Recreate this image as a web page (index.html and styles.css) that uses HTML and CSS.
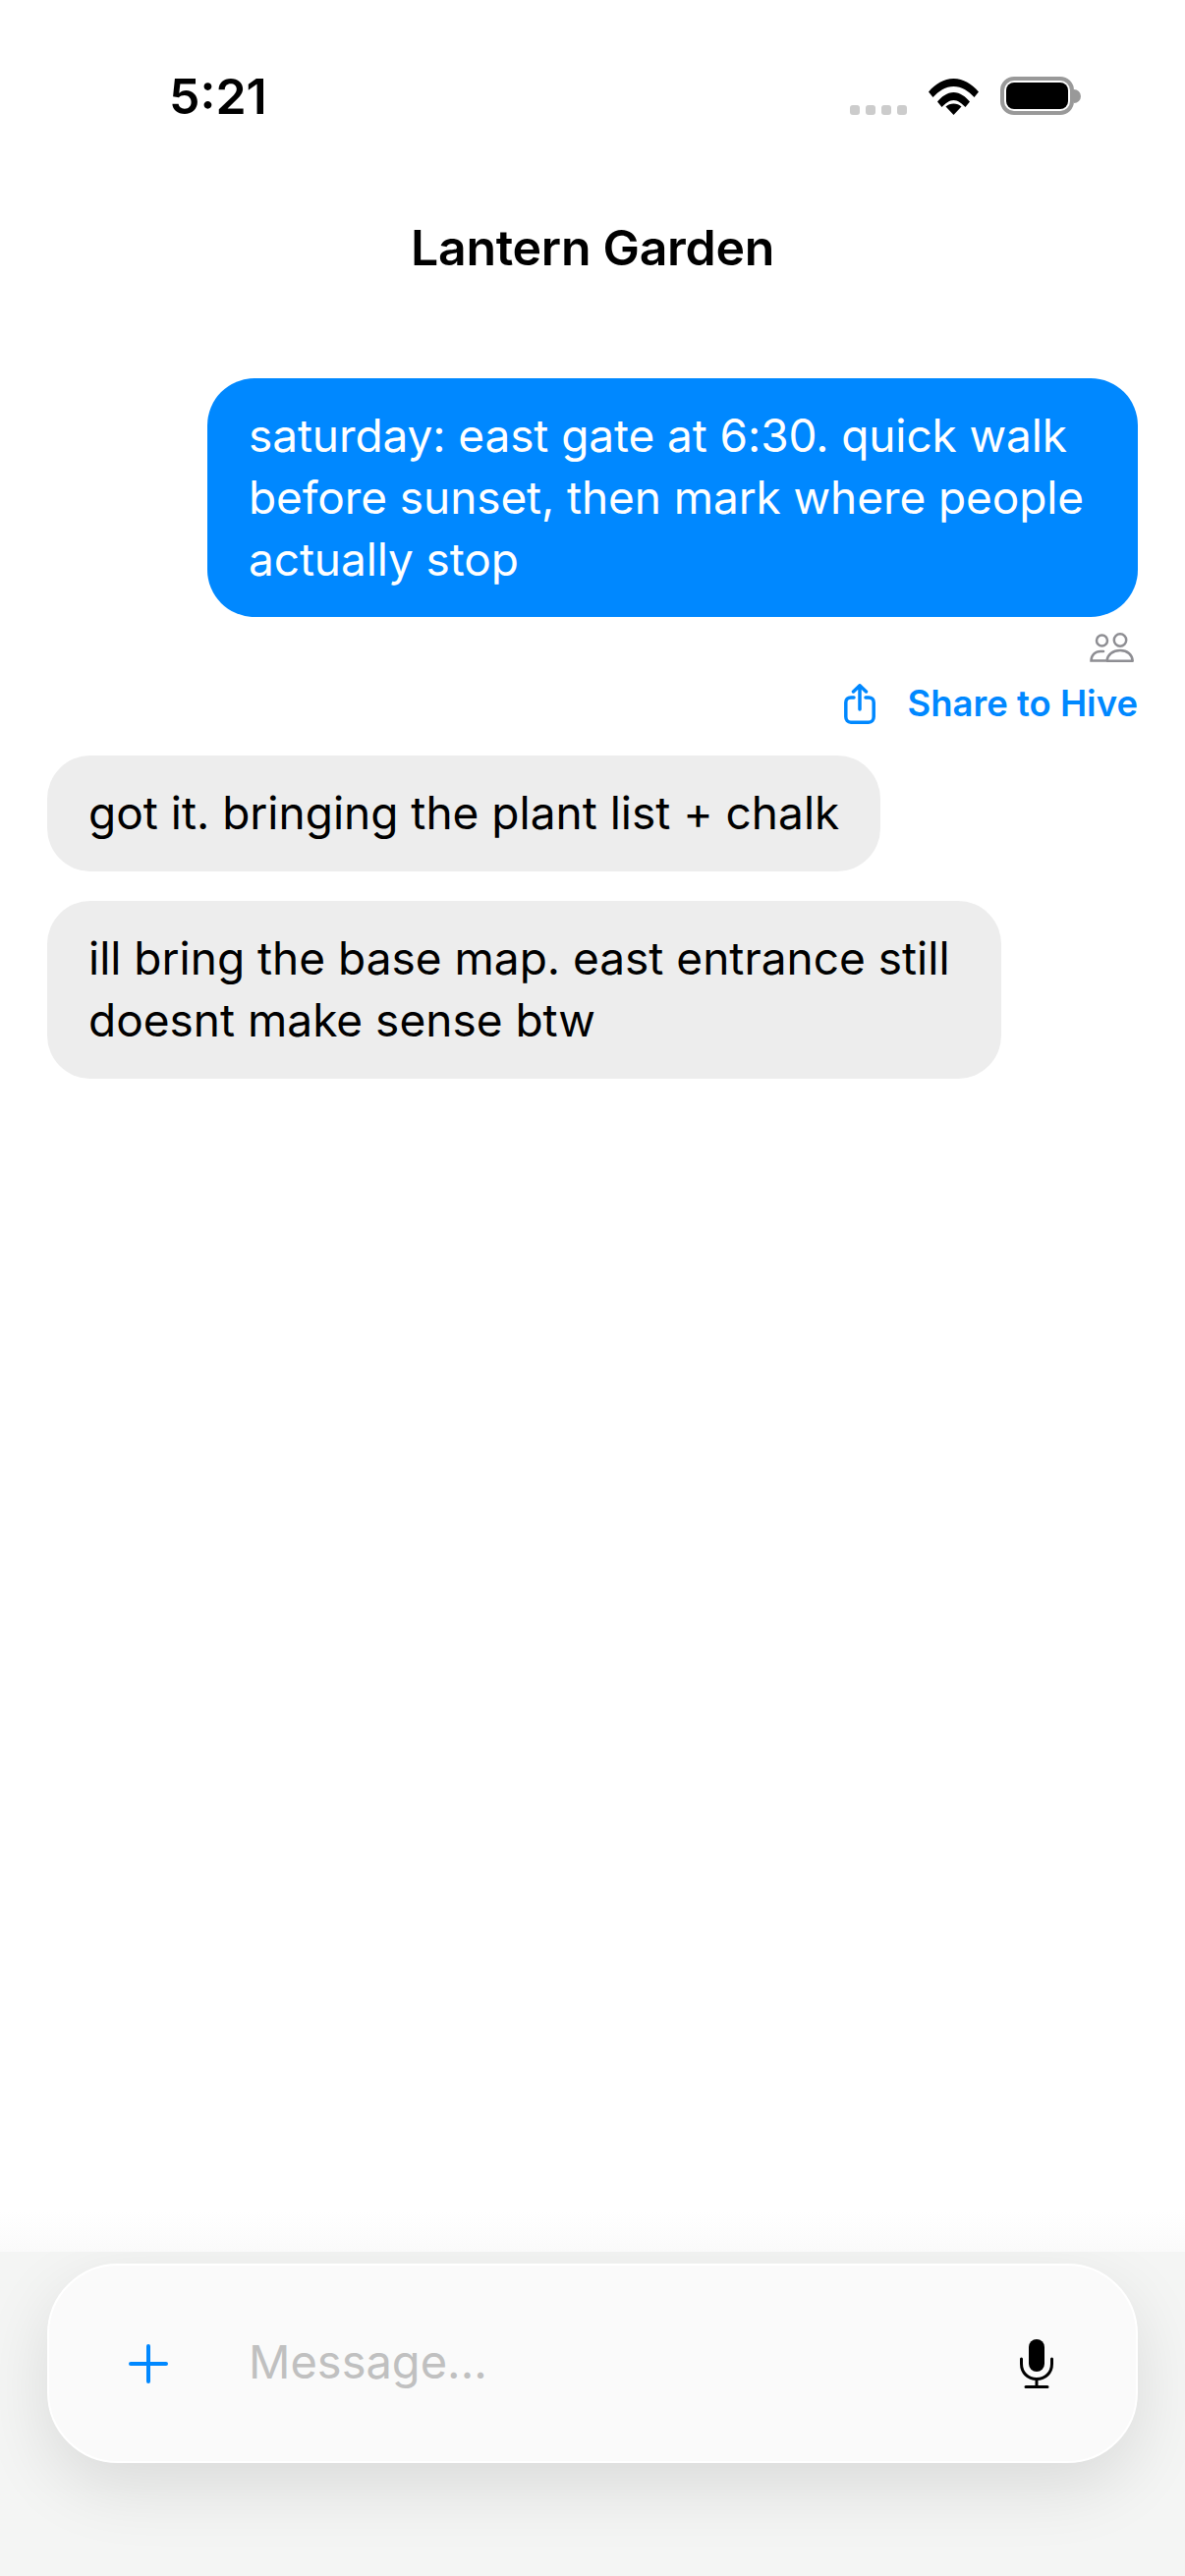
FILE: index.html
```html
<!DOCTYPE html>
<html lang="en">
<head>
    <meta charset="UTF-8">
    <meta name="viewport" content="width=device-width, initial-scale=1.0">
    <title>Lantern Garden</title>
    <link rel="stylesheet" href="styles.css">
</head>
<body>
    <div class="screen">
        <!-- Status bar -->
        <div class="status-bar">
            <span class="time">5:21</span>
            <div class="status-icons">
                <div class="signal"><i></i><i></i><i></i><i></i></div>
                <svg class="wifi" viewBox="0 0 51 37" width="51" height="37">
                    <path d="M0 13.5C7 5.5 15.5 0 25.5 0S44 5.5 51 13.5L46.5 19C40.5 12.5 33.5 8 25.5 8S10.500 12.500 4.500 19Z"/>
                    <path d="M9 23.500C13 18.500 19 14 25.500 14S38 18.500 42 23.500L37.500 29C34 25.500 30 22 25.500 22S17 25.500 13.500 29Z"/>
                    <path d="M17.500 28.500C19.500 26.500 22.500 25.500 25.500 25.500S31.500 26.500 33.500 28.500L25.500 37Z"/>
                </svg>
                <div class="battery"><div class="battery-fill"></div></div>
                <div class="battery-nub"></div>
            </div>
        </div>

        <!-- Title -->
        <div class="nav-bar"><h1>Lantern Garden</h1></div>

        <!-- Messages -->
        <div class="chat">
            <div class="bubble sent">saturday: east gate at 6:30. quick walk before sunset, then mark where people actually stop</div>
            <div class="audience">
                <svg viewBox="0 0 45 30" width="45" height="30" fill="none" stroke="#8e8e93" stroke-width="2.5">
                    <circle cx="12.500" cy="8" r="5.500"/>
                    <path d="M14 19H11C5.500 19 1.500 23 1.500 28.500H16" stroke-linecap="round"/>
                    <circle cx="31" cy="7.500" r="6.200"/>
                    <path d="M31 18C23.500 18 18 22.500 17.500 28.700H43.700C43.300 22.500 38.500 18 31 18Z" stroke-linejoin="round"/>
                </svg>
            </div>
            <div class="share">
                <svg viewBox="0 0 32 41" width="32" height="41" fill="none" stroke="#0088ff" stroke-width="3.500" stroke-linecap="round" stroke-linejoin="round">
                    <path d="M10 14H7C3.800 14 1.800 16 1.800 19V33.500C1.800 37 3.800 39.200 7 39.200H25C28.200 39.200 30.200 37 30.200 33.500V19C30.200 16 28.200 14 25 14H22"/>
                    <path d="M16 26V2M9.500 8L16 1.800L22.500 8"/>
                </svg>
                <span>Share to Hive</span>
            </div>
            <div class="bubble received">got it. bringing the plant list + chalk</div>
            <div class="bubble received">ill bring the base map. east entrance still doesnt make sense btw</div>
        </div>

        <!-- Composer -->
        <div class="composer-fade"></div>
        <div class="composer-area">
            <div class="composer">
                <svg class="plus" viewBox="0 0 40 40" width="40" height="40" stroke="#0088ff" stroke-width="4" stroke-linecap="round">
                    <path d="M20 2V38M2 20H38"/>
                </svg>
                <span class="placeholder">Message...</span>
                <svg class="mic" viewBox="0 0 34 50" width="34" height="50" fill="none" stroke="#000" stroke-width="3" stroke-linecap="round">
                    <rect x="9" y="0" width="16" height="33" rx="8" fill="#000" stroke="none"/>
                    <path d="M1.500 20V25C1.500 34 8 40.500 17 40.500S32.500 34 32.500 25V20"/>
                    <path d="M17 40.500V48.500M6 48.500H28"/>
                </svg>
            </div>
        </div>
    </div>
</body>
</html>
```

FILE: styles.css
```css
/* Reset et style de base */
* {
    margin: 0;
    padding: 0;
    box-sizing: border-box;
}

body {
    font-family: Inter, "Noto Sans", sans-serif;
    background-color: #fff;
    color: #000;
    overflow: hidden;
}

.screen {
    display: flex;
    flex-direction: column;
    width: 1206px;
    height: 2622px;
}

.status-bar {
    display: flex;
    justify-content: space-between;
    height: 150px;
    padding: 67px 106px 0 172px;
}

.time {
    font-size: 50px;
    line-height: 62px;
    font-weight: 600;
}

.status-icons {
    display: flex;
    align-items: flex-end;
    height: 50px;
    padding-top: 11px;
}

.signal {
    display: flex;
    gap: 6px;
    margin-right: 22px;
}

.signal i {
    width: 10px;
    height: 10px;
    border-radius: 3px;
    background-color: #ccc;
}

.wifi {
    margin-right: 22px;
}

.battery {
    width: 75px;
    height: 39px;
    padding: 2px;
    border: 4px solid #999;
    border-radius: 14px;
}

.battery-fill {
    height: 100%;
    border-radius: 8px;
    background-color: #000;
}

.battery-nub {
    width: 7px;
    height: 14px;
    margin: 0 0 12px 0;
    border-radius: 0 7px 7px 0;
    background-color: #999;
}

.nav-bar {
    display: flex;
    align-items: center;
    justify-content: center;
    height: 204px;
}

.nav-bar h1 {
    font-size: 50px;
    font-weight: 600;
    letter-spacing: -0.3px;
}

.chat {
    flex: 1;
    display: flex;
    flex-direction: column;
    padding: 31px 48px 0;
}

.bubble {
    font-size: 46px;
    line-height: 63px;
    padding: 27px 42px;
}

.sent {
    align-self: flex-end;
    max-width: 947px;
    border-radius: 48px;
    background-color: #0088ff;
    color: #fff;
    letter-spacing: -0.1px;
}

.audience {
    display: flex;
    justify-content: flex-end;
    margin-top: 16px;
    padding-right: 4px;
}

.share {
    display: flex;
    align-items: center;
    justify-content: flex-end;
    gap: 32px;
    margin: 22px 0 32px;
    color: #0088ff;
    font-size: 36.500px;
    line-height: 41px;
    font-weight: 600;
}

.received {
    align-self: flex-start;
    max-width: 971px;
    margin-bottom: 30px;
    padding-bottom: 28px;
    border-radius: 44px;
    background-color: #ededed;
}

.composer-fade {
    height: 40px;
    background: linear-gradient(#fff, #fafafa);
}

.composer-area {
    height: 330px;
    padding: 12px 48px 0;
    overflow: hidden;
    background-color: #f4f5f4;
}

.composer {
    display: flex;
    align-items: center;
    height: 203px;
    padding: 0 84px 0 81px;
    border: 2px solid #fff;
    border-radius: 72px;
    background-color: #fafafa;
    box-shadow: 0 24px 70px rgba(0, 0, 0, 0.11);
}

.plus {
    margin-right: 82px;
}

.placeholder {
    flex: 1;
    padding-bottom: 5px;
    color: #c0c0c0;
    font-size: 47px;
}
```
